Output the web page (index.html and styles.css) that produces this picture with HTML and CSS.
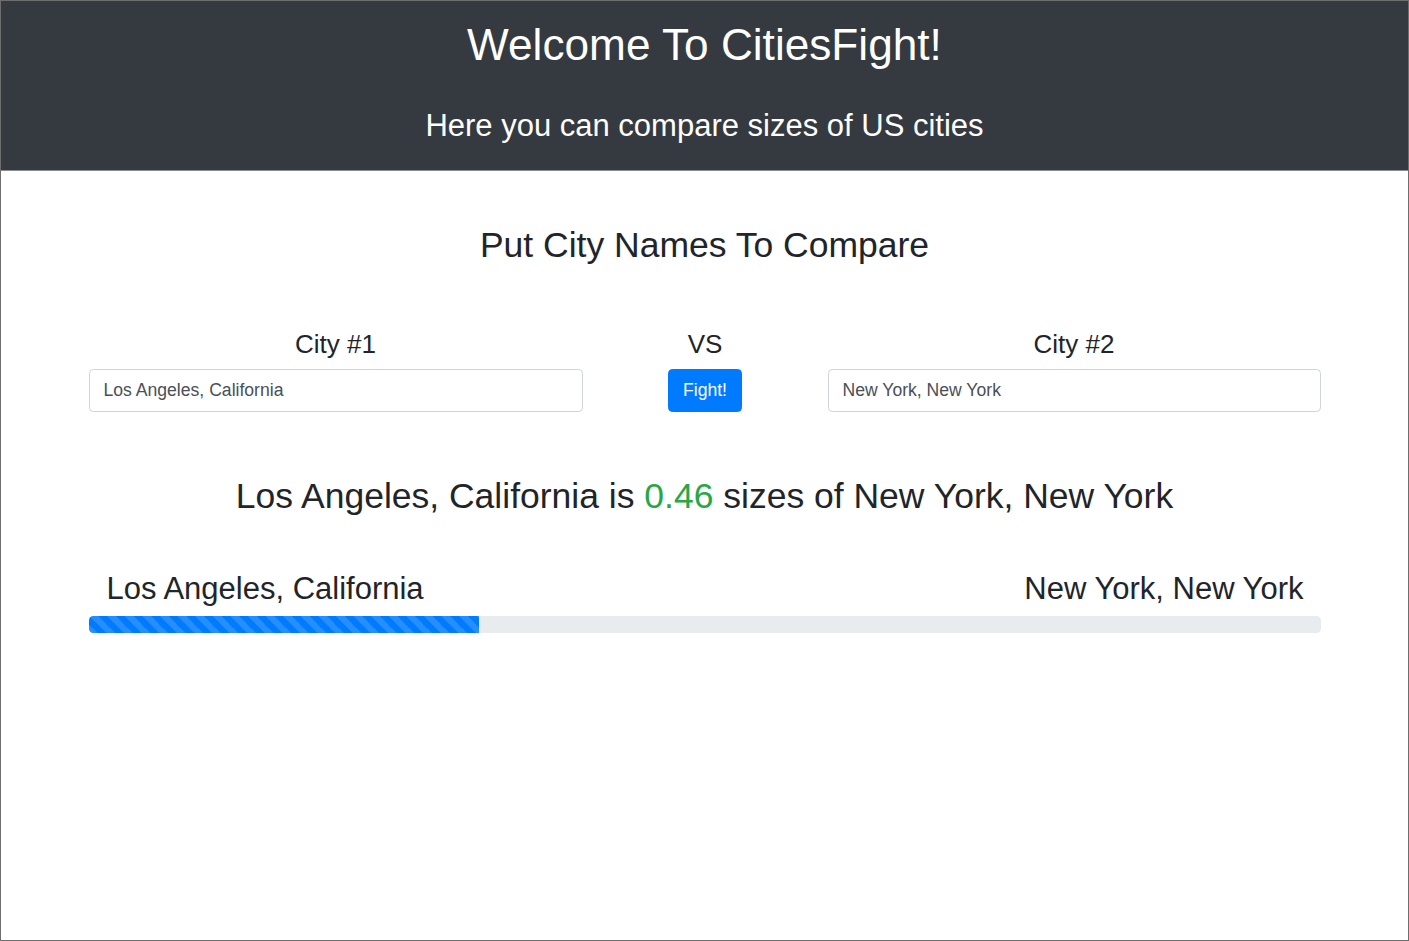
FILE: index.html
```html
<!DOCTYPE html>
<html lang="en">
<head>
<meta charset="utf-8">
<title>CitiesFight</title>
<link rel="stylesheet" href="styles.css">
</head>
<body>
<header class="hero">
  <h1 class="hero-title">Welcome To CitiesFight!</h1>
  <p class="hero-sub">Here you can compare sizes of US cities</p>
</header>
<main class="container">
  <h2 class="section-title">Put City Names To Compare</h2>
  <div class="compare-row">
    <div class="city-col">
      <label class="city-label" for="c1">City #1</label>
      <input class="city-input" id="c1" type="text" value="Los Angeles, California">
    </div>
    <div class="vs-col">
      <div class="city-label">VS</div>
      <button class="btn-fight" type="button">Fight!</button>
    </div>
    <div class="city-col">
      <label class="city-label" for="c2">City #2</label>
      <input class="city-input" id="c2" type="text" value="New York, New York">
    </div>
  </div>
  <h2 class="result">Los Angeles, California is <span class="ratio">0.46</span> sizes of New York, New York</h2>
  <div class="bar-labels">
    <span>Los Angeles, California</span>
    <span>New York, New York</span>
  </div>
  <div class="progress">
    <div class="progress-fill" style="width: 31.7%"></div>
  </div>
</main>
</body>
</html>
```
FILE: styles.css
```css
* { box-sizing: border-box; }
html, body { height: 100%; }
body {
  margin: 0;
  border: 1px solid #6e6e6e;
  font-family: "Liberation Sans", Arial, sans-serif;
  color: #212529;
  background: #fff;
}
.hero {
  background: #343a40;
  color: #fff;
  text-align: center;
  height: 170px;
  border-bottom: 1px solid #8a8d91;
  padding-top: 17px;
}
.hero-title {
  margin: 0;
  font-size: 44.2px;
  font-weight: 400;
  line-height: 1.2;
}
.hero-sub {
  margin: 36px 0 0;
  font-size: 31px;
  line-height: 1.2;
}
.container {
  width: 1232px;
  margin: 0 auto;
}
.section-title {
  margin: 53px 0 0;
  text-align: center;
  font-size: 35.5px;
  font-weight: 400;
  line-height: 1.2;
}
.compare-row {
  display: grid;
  grid-template-columns: 494px 1fr 493px;
  margin-top: 62px;
}
.city-col, .vs-col {
  display: flex;
  flex-direction: column;
  align-items: center;
}
.city-label {
  display: block;
  font-size: 26px;
  line-height: 1.2;
  margin-bottom: 9px;
}
.city-input {
  width: 100%;
  height: 43px;
  border: 1px solid #ced4da;
  border-radius: 4.4px;
  padding: 0 14px;
  font-family: inherit;
  font-size: 17.6px;
  color: #495057;
  background: #fff;
}
.btn-fight {
  height: 43px;
  border: 1px solid #007bff;
  border-radius: 4.4px;
  background: #007bff;
  color: #fff;
  font-family: inherit;
  font-size: 17.6px;
  padding: 0 14px;
}
.result {
  margin: 63px 0 0;
  text-align: center;
  font-size: 35.5px;
  font-weight: 400;
  line-height: 1.2;
}
.ratio { color: #28a745; }
.bar-labels {
  display: flex;
  justify-content: space-between;
  padding: 0 17px 0 18px;
  margin-top: 53px;
  font-size: 31px;
  line-height: 1.2;
}
.progress {
  margin-top: 8px;
  height: 17.6px;
  background: #e9ecef;
  border-radius: 4.4px;
  overflow: hidden;
  display: flex;
}
.progress-fill {
  height: 100%;
  background-color: #007bff;
  background-image: linear-gradient(45deg, rgba(255,255,255,.15) 25%, transparent 25%, transparent 50%, rgba(255,255,255,.15) 50%, rgba(255,255,255,.15) 75%, transparent 75%, transparent);
  background-size: 17.6px 17.6px;
}
```
